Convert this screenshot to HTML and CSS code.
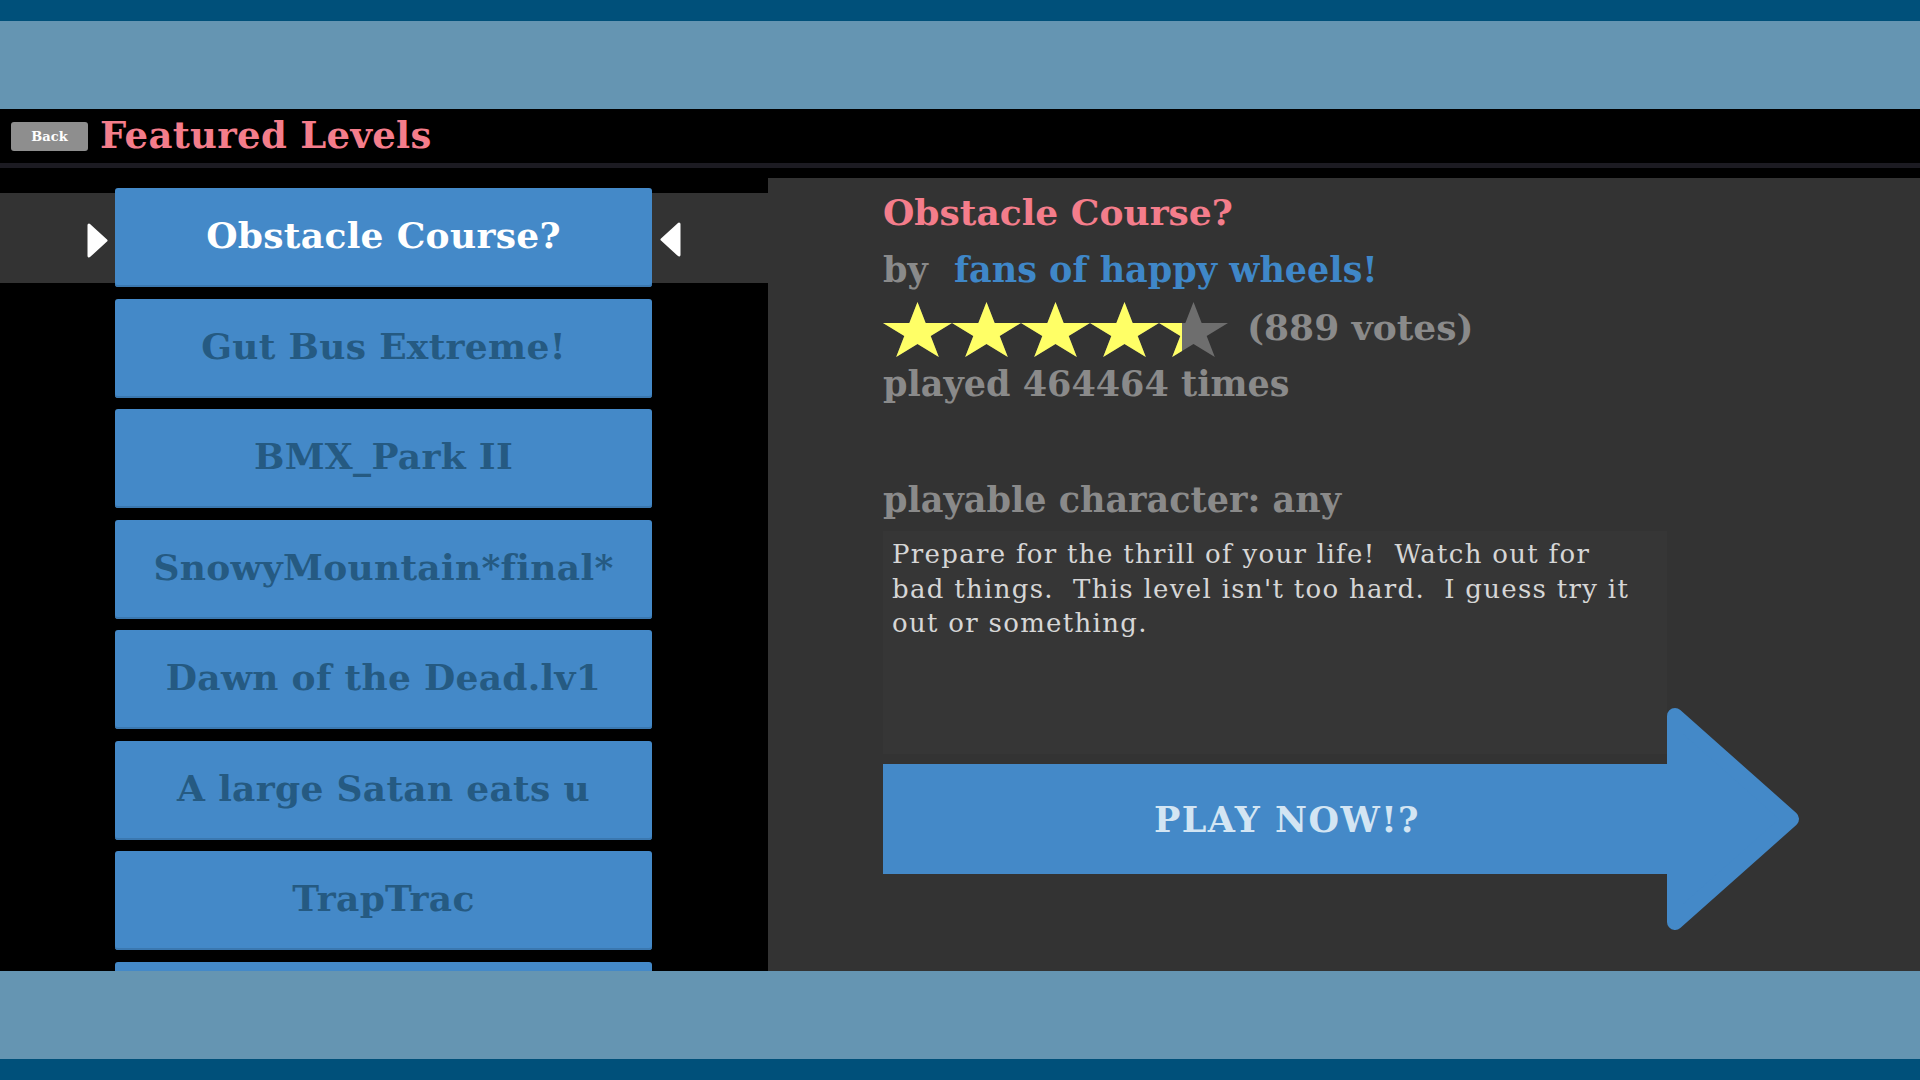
FILE: index.html
```
<!DOCTYPE html>
<html lang="en">
<head>
    <meta charset="UTF-8">
    <meta name="viewport" content="width=device-width, initial-scale=1.0">
    <title>Featured Levels</title>
    <link rel="stylesheet" href="styles.css">
</head>
<body>

    <div class="frame-edge"></div>
    <div class="frame-band"></div>

    <div class="screen">
        <!-- Title bar -->
        <header class="title-bar">
            <button class="back-btn">Back</button>
            <h1>Featured Levels</h1>
        </header>
        <div class="title-rule"></div>

        <div class="browser">
            <!-- Level list -->
            <div class="level-list">
                <div class="level-row selected">
                    <svg class="pointer" width="21" height="35" viewBox="0 0 21 35"><polygon points="2,2 19,17.5 2,33"/></svg>
                    <button class="level-btn">Obstacle Course?</button>
                    <svg class="pointer" width="21" height="35" viewBox="0 0 21 35"><polygon points="19,2 2,17.5 19,33"/></svg>
                </div>
                <div class="level-row"><button class="level-btn">Gut Bus Extreme!</button></div>
                <div class="level-row"><button class="level-btn">BMX_Park II</button></div>
                <div class="level-row"><button class="level-btn">SnowyMountain*final*</button></div>
                <div class="level-row"><button class="level-btn">Dawn of the Dead.lv1</button></div>
                <div class="level-row"><button class="level-btn">A large Satan eats u</button></div>
                <div class="level-row"><button class="level-btn">TrapTrac</button></div>
                <div class="level-row"><button class="level-btn"></button></div>
            </div>

            <!-- Level details -->
            <div class="level-info">
                <h2 class="level-name">Obstacle Course?</h2>
                <p class="info-line">by <span class="author">fans of happy wheels!</span></p>
                <div class="rating">
                    <svg class="stars" width="345" height="55" viewBox="0 0 345 55">
                        <defs>
                            <polygon id="star" points="34.5,0 42.65,21 69,21 47.68,34 55.82,55 34.5,42 13.18,55 21.32,34 0,21 26.35,21"/>
                            <clipPath id="rated"><rect x="0" y="0" width="299" height="55"/></clipPath>
                        </defs>
                        <g fill="#6e6e6e">
                            <use href="#star" x="0"/>
                            <use href="#star" x="69"/>
                            <use href="#star" x="138"/>
                            <use href="#star" x="207"/>
                            <use href="#star" x="276"/>
                        </g>
                        <g fill="#ffff66" clip-path="url(#rated)">
                            <use href="#star" x="0"/>
                            <use href="#star" x="69"/>
                            <use href="#star" x="138"/>
                            <use href="#star" x="207"/>
                            <use href="#star" x="276"/>
                        </g>
                    </svg>
                    <span class="votes">(889 votes)</span>
                </div>
                <p class="info-line">played 464464 times</p>

                <p class="info-line character">playable character: any</p>
                <div class="description">Prepare for the thrill of your life!  Watch out for bad things.  This level isn't too hard.  I guess try it out or something.</div>

                <div class="play">
                    <button class="play-body">PLAY NOW!?</button>
                    <svg class="play-head" width="140" height="222" viewBox="0 0 140 222"><polygon points="8,8 124,111 8,214"/></svg>
                </div>
            </div>
        </div>
    </div>

    <div class="frame-band"></div>
    <div class="frame-edge"></div>

</body>
</html>
```

FILE: styles.css
```
body {
    margin: 0;
    width: 1920px;
    height: 1080px;
    overflow: hidden;
    background: #000;
    font-family: "DejaVu Serif", serif;
}

/* Letterbox bars round the game screen */
.frame-edge {
    height: 21px;
    background: #00507a;
}

.frame-band {
    height: 88px;
    background: #6595b2;
}

.screen {
    height: 862px;
    display: flex;
    flex-direction: column;
    background: #000;
}

/* Title bar */
.title-bar {
    height: 54px;
    display: flex;
    align-items: center;
    padding-left: 11px;
}

.back-btn {
    width: 77px;
    height: 29px;
    margin-right: 12px;
    padding: 0;
    border: none;
    border-radius: 3px;
    background: #8e8e8e;
    color: #fff;
    font-family: "DejaVu Serif", serif;
    font-size: 13px;
    font-weight: bold;
}

.title-bar h1 {
    margin: 0 0 2px;
    color: #f47d8b;
    font-size: 37px;
    font-weight: bold;
    letter-spacing: 0.3px;
}

.title-rule {
    height: 5px;
    background: #1c1b22;
}

.browser {
    flex: 1;
    display: flex;
    min-height: 0;
}

/* Level list */
.level-list {
    width: 768px;
    padding-top: 20px;
    overflow: hidden;
}

.level-row {
    height: 99px;
    margin-bottom: 11.5px;
    padding-left: 115px;
    display: flex;
    align-items: center;
}

.level-row.selected {
    padding-left: 87px;
    background: linear-gradient(to bottom, transparent 5px, #333 5px, #333 95px, transparent 95px);
}

.pointer {
    margin-top: 6px;
    fill: #fff;
    stroke: #fff;
    stroke-width: 3;
    stroke-linejoin: round;
}

.pointer:first-child {
    margin-right: 7px;
}

.pointer:last-child {
    margin-left: 8px;
    margin-top: 3px;
}

.level-btn {
    width: 537px;
    height: 99px;
    padding: 0 0 5px;
    border: none;
    border-radius: 3px;
    background: #4489c8;
    box-shadow: inset 0 -2px 0 #3b78b0;
    color: #255a82;
    font-family: "DejaVu Serif", serif;
    font-size: 36px;
    font-weight: bold;
    letter-spacing: 0.3px;
}

.selected .level-btn {
    color: #fff;
}

/* Level details */
.level-info {
    flex: 1;
    margin-top: 10px;
    padding: 6px 0 0 115px;
    background: #333;
}

.level-name,
.info-line {
    margin: 0;
    font-size: 35px;
    font-weight: bold;
    line-height: 57px;
}

.level-name {
    color: #f47d8b;
    font-size: 36px;
}

.info-line {
    color: #8a8a8a;
}

.author {
    margin-left: 14px;
    color: #3f87c8;
}

.rating {
    height: 57px;
    display: flex;
    align-items: center;
    color: #8a8a8a;
    font-size: 36px;
    font-weight: bold;
}

.stars {
    margin-top: 5px;
}

.votes {
    margin-left: 19px;
}

.character {
    margin-top: 59px;
}

.description {
    width: 745px;
    height: 217px;
    margin-top: 3px;
    padding: 6px 30px 0 9px;
    background: #363636;
    color: #d6d6d6;
    font-size: 26px;
    letter-spacing: 1.3px;
    line-height: 34.5px;
    white-space: pre-wrap;
}

/* Arrow-shaped play button */
.play {
    display: flex;
    align-items: center;
    margin-top: -46px;
}

.play-body {
    width: 784px;
    height: 110px;
    padding: 0 0 0 24px;
    border: none;
    background: #4489c8;
    color: #d3e5f3;
    font-family: "DejaVu Serif", serif;
    font-size: 35px;
    font-weight: bold;
    letter-spacing: 1.5px;
}

.play-head {
    fill: #4489c8;
    stroke: #4489c8;
    stroke-width: 16;
    stroke-linejoin: round;
}
```
